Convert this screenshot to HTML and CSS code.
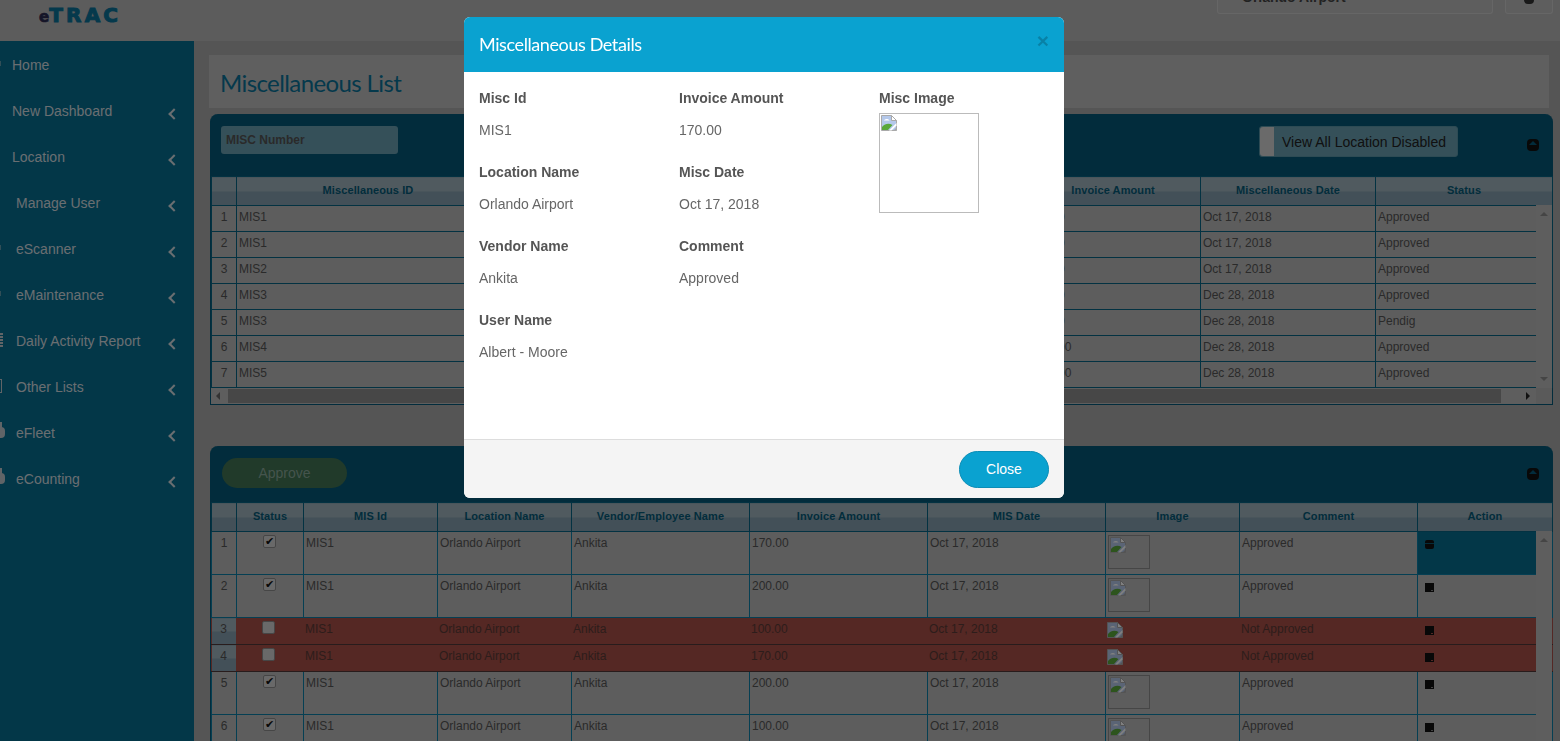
FILE: index.html
```html
<!DOCTYPE html>
<html lang="en">
<head>
  <meta charset="UTF-8">
  <title>Miscellaneous List</title>
  <link rel="stylesheet" href="styles.css">
</head>
<body>
  <svg class="defs" width="0" height="0">
    <symbol id="broken" viewBox="0 0 16 16">
      <path d="M0.5 0.5H10.5L15.5 5.5V15.5H0.5Z" fill="#b4c8ea" stroke="#a9a9a9"/>
      <path d="M10.5 0.5V5.5H15.5Z" fill="#fff" stroke="#a9a9a9"/>
      <path d="M3 5.5C4 3.5 7.5 3.5 8.5 5.5Z" fill="#fff"/>
      <path d="M1 15V12C4 8.5 8 8 11.5 10L7 15Z" fill="#5aa83a"/>
      <path d="M15.5 8L8 15.5H10.5L15.5 10.5Z" fill="#fff"/>
      <path d="M12.5 15.5L15.5 12.5V15.5Z" fill="#a9a9a9"/>
    </symbol>
  </svg>

  <header class="topbar">
    <div class="logo"><span class="logo-e">e</span>TRAC</div>
    <div class="top-right">
      <div class="loc-box"><span class="loc-name">Orlando Airport</span></div>
      <div class="gear-box"><span class="gear-dot"></span></div>
    </div>
  </header>

  <div class="layout">
    <nav class="sidebar">
      <a class="nav-item nav-plain"><b class="stub stub-tick"></b><span>Home</span></a>
      <a class="nav-item nav-plain"><span>New Dashboard</span><i class="chev"></i></a>
      <a class="nav-item nav-plain"><span>Location</span><i class="chev"></i></a>
      <a class="nav-item"><span>Manage User</span><i class="chev"></i></a>
      <a class="nav-item"><b class="stub stub-tick"></b><span>eScanner</span><i class="chev"></i></a>
      <a class="nav-item"><b class="stub stub-tick"></b><span>eMaintenance</span><i class="chev"></i></a>
      <a class="nav-item"><b class="stub stub-list"></b><span>Daily Activity Report</span><i class="chev"></i></a>
      <a class="nav-item"><b class="stub stub-box"></b><span>Other Lists</span><i class="chev"></i></a>
      <a class="nav-item"><b class="stub stub-lock"></b><span>eFleet</span><i class="chev"></i></a>
      <a class="nav-item"><b class="stub stub-lock"></b><span>eCounting</span><i class="chev"></i></a>
    </nav>

    <main class="content">
      <div class="title-box"><h1>Miscellaneous List</h1></div>

      <section class="panel panel-top">
        <div class="panel-head">
          <input class="search-input" type="text" placeholder="MISC Number">
          <div class="toggle"><span class="toggle-handle"></span><span class="toggle-label">View All Location Disabled</span></div>
          <span class="collapse"></span>
        </div>
        <div class="grid-wrap">
          <table class="grid grid-one">
            <colgroup>
              <col class="c-num"><col class="c-wide"><col class="c-wide"><col class="c-wide"><col class="c-mid"><col class="c-mid"><col class="c-last">
            </colgroup>
            <thead>
              <tr><th></th><th>Miscellaneous ID</th><th>Location Name</th><th>Vendor Name</th><th>Invoice Amount</th><th>Miscellaneous Date</th><th>Status</th></tr>
            </thead>
            <tbody>
              <tr><td class="num">1</td><td>MIS1</td><td>Orlando Airport</td><td>Ankita</td><td>170.00</td><td>Oct 17, 2018</td><td>Approved</td></tr>
              <tr><td class="num">2</td><td>MIS1</td><td>Orlando Airport</td><td>Ankita</td><td>200.00</td><td>Oct 17, 2018</td><td>Approved</td></tr>
              <tr><td class="num">3</td><td>MIS2</td><td>Orlando Airport</td><td>Ankita</td><td>100.00</td><td>Oct 17, 2018</td><td>Approved</td></tr>
              <tr><td class="num">4</td><td>MIS3</td><td>Orlando Airport</td><td>Ankita</td><td>170.00</td><td>Dec 28, 2018</td><td>Approved</td></tr>
              <tr><td class="num">5</td><td>MIS3</td><td>Orlando Airport</td><td>Ankita</td><td>200.00</td><td>Dec 28, 2018</td><td>Pendig</td></tr>
              <tr><td class="num">6</td><td>MIS4</td><td>Orlando Airport</td><td>Ankita</td><td>1000.00</td><td>Dec 28, 2018</td><td>Approved</td></tr>
              <tr><td class="num">7</td><td>MIS5</td><td>Orlando Airport</td><td>Ankita</td><td>1000.00</td><td>Dec 28, 2018</td><td>Approved</td></tr>
            </tbody>
          </table>
          <div class="vscroll vscroll-top"><i class="arrow-up"></i><i class="arrow-down"></i></div>
        </div>
        <div class="hscroll"><i class="arrow-left"></i><span class="hthumb"></span><i class="arrow-right"></i><span class="hcorner"></span></div>
      </section>

      <section class="panel panel-bottom">
        <div class="panel-head panel-head-low">
          <button class="approve-btn">Approve</button>
          <span class="collapse"></span>
        </div>
        <div class="grid-wrap">
          <table class="grid grid-two">
            <colgroup>
              <col class="d-num"><col class="d-status"><col class="d-std"><col class="d-std"><col class="d-lg"><col class="d-lg"><col class="d-lg"><col class="d-std"><col class="d-lg"><col class="d-last">
            </colgroup>
            <thead>
              <tr><th></th><th>Status</th><th>MIS Id</th><th>Location Name</th><th>Vendor/Employee Name</th><th>Invoice Amount</th><th>MIS Date</th><th>Image</th><th>Comment</th><th>Action</th></tr>
            </thead>
            <tbody>
              <tr class="tall"><td class="num">1</td><td class="mid"><input class="chk" type="checkbox" checked></td><td>MIS1</td><td>Orlando Airport</td><td>Ankita</td><td>170.00</td><td>Oct 17, 2018</td><td><span class="thumb"><svg class="bi"><use href="#broken"/></svg></span></td><td>Approved</td><td class="act act-on"><span class="act-icon act-icon-on"></span></td></tr>
              <tr class="tall"><td class="num">2</td><td class="mid"><input class="chk" type="checkbox" checked></td><td>MIS1</td><td>Orlando Airport</td><td>Ankita</td><td>200.00</td><td>Oct 17, 2018</td><td><span class="thumb"><svg class="bi"><use href="#broken"/></svg></span></td><td>Approved</td><td class="act"><span class="act-icon"></span></td></tr>
              <tr class="red"><td class="num">3</td><td class="mid"><input class="chk" type="checkbox"></td><td>MIS1</td><td>Orlando Airport</td><td>Ankita</td><td>100.00</td><td>Oct 17, 2018</td><td><svg class="bi"><use href="#broken"/></svg></td><td>Not Approved</td><td class="act"><span class="act-icon"></span></td></tr>
              <tr class="red"><td class="num">4</td><td class="mid"><input class="chk" type="checkbox"></td><td>MIS1</td><td>Orlando Airport</td><td>Ankita</td><td>170.00</td><td>Oct 17, 2018</td><td><svg class="bi"><use href="#broken"/></svg></td><td>Not Approved</td><td class="act"><span class="act-icon"></span></td></tr>
              <tr class="tall"><td class="num">5</td><td class="mid"><input class="chk" type="checkbox" checked></td><td>MIS1</td><td>Orlando Airport</td><td>Ankita</td><td>200.00</td><td>Oct 17, 2018</td><td><span class="thumb"><svg class="bi"><use href="#broken"/></svg></span></td><td>Approved</td><td class="act"><span class="act-icon"></span></td></tr>
              <tr class="tall"><td class="num">6</td><td class="mid"><input class="chk" type="checkbox" checked></td><td>MIS1</td><td>Orlando Airport</td><td>Ankita</td><td>100.00</td><td>Oct 17, 2018</td><td><span class="thumb"><svg class="bi"><use href="#broken"/></svg></span></td><td>Approved</td><td class="act"><span class="act-icon"></span></td></tr>
            </tbody>
          </table>
          <div class="vscroll vscroll-low"><i class="arrow-up"></i></div>
        </div>
      </section>
    </main>
  </div>

  <div class="backdrop"></div>

  <div class="modal">
    <div class="modal-head">
      <h4>Miscellaneous Details</h4>
      <span class="modal-x">&times;</span>
    </div>
    <div class="modal-body">
      <div class="field-col">
        <div class="field"><label>Misc Id</label><p>MIS1</p></div>
        <div class="field"><label>Location Name</label><p>Orlando Airport</p></div>
        <div class="field"><label>Vendor Name</label><p>Ankita</p></div>
        <div class="field"><label>User Name</label><p>Albert - Moore</p></div>
      </div>
      <div class="field-col">
        <div class="field"><label>Invoice Amount</label><p>170.00</p></div>
        <div class="field"><label>Misc Date</label><p>Oct 17, 2018</p></div>
        <div class="field"><label>Comment</label><p>Approved</p></div>
      </div>
      <div class="field-col">
        <label>Misc Image</label>
        <div class="misc-image"><svg class="bi"><use href="#broken"/></svg></div>
      </div>
    </div>
    <div class="modal-foot">
      <button class="close-btn">Close</button>
    </div>
  </div>
</body>
</html>
```

FILE: styles.css
```css
* {
  box-sizing: border-box;
}
html, body {
  height: 741px;
  overflow: hidden;
}
body {
  margin: 0;
  font-family: "Liberation Sans", Arial, sans-serif;
  font-size: 12px;
  color: #555;
  background-color: #ababab;
}
.defs {
  display: block;
  height: 0;
}
.bi {
  display: block;
  width: 16px;
  height: 16px;
}

/* top bar */
.topbar {
  height: 41px;
  display: flex;
  justify-content: space-between;
  background-color: #b8b8b8;
}
.logo {
  margin: 3px 0 0 39px;
  font-family: "DejaVu Sans", sans-serif;
  font-weight: bold;
  font-size: 20px;
  line-height: 24px;
  letter-spacing: 3.2px;
  color: #0a7298;
  -webkit-text-stroke: 1px #0a7298;
}
.logo-e {
  font-size: 15px;
  letter-spacing: 0;
  color: #2a2a50;
  -webkit-text-stroke: 0.7px #2a2a50;
}
.top-right {
  display: flex;
  gap: 12px;
  margin-right: 7px;
}
.loc-box {
  width: 276px;
  height: 14px;
  padding-left: 24px;
  overflow: hidden;
  background-color: #bdbdbd;
  border: 1px solid #ccc;
  border-top: none;
  border-radius: 0 0 3px 3px;
}
.loc-name {
  display: block;
  margin-top: -11px;
  line-height: 16px;
  font-size: 14px;
  font-weight: bold;
  color: #444;
}
.gear-box {
  width: 48px;
  height: 14px;
  display: flex;
  justify-content: center;
  background-color: #bdbdbd;
  border: 1px solid #ccc;
  border-top: none;
  border-radius: 0 0 3px 3px;
}
.gear-dot {
  width: 10px;
  height: 4px;
  background-color: #333;
  border-radius: 0 0 5px 5px;
}

.layout {
  display: flex;
  height: 700px;
}

/* sidebar */
.sidebar {
  width: 194px;
  flex: none;
  padding-top: 1px;
  background-color: #066e90;
}
.nav-item {
  height: 46px;
  display: flex;
  align-items: center;
  padding: 0 16px 0 16px;
  font-size: 14px;
  color: #d4dde2;
  overflow: hidden;
  position: relative;
}
.nav-plain {
  padding-left: 12px;
}
.chev {
  width: 8px;
  height: 8px;
  margin-left: auto;
  margin-top: 6px;
  transform: rotate(45deg);
  border-left: 2px solid #d4dde2;
  border-bottom: 2px solid #d4dde2;
}
.stub {
  position: absolute;
  left: 0;
  top: 15px;
  background-color: #c0c9ce;
}
.stub-tick {
  width: 1px;
  height: 5px;
  top: 19px;
  opacity: 0.5;
}
.stub-list {
  width: 3px;
  height: 15px;
  background: repeating-linear-gradient(#c0c9ce 0, #c0c9ce 2px, transparent 2px, transparent 3px);
}
.stub-box {
  width: 2px;
  height: 14px;
  background: transparent;
  border: 1px solid #c0c9ce;
  border-left: none;
}
.stub-lock {
  left: -3px;
  top: 17px;
  width: 8px;
  height: 11px;
  border-radius: 4px;
}
.stub-lock::before {
  content: "";
  position: absolute;
  left: 2px;
  top: -5px;
  width: 3px;
  height: 7px;
  background-color: #c0c9ce;
}

/* content */
.content {
  flex: 1;
  min-width: 0;
  padding: 14px 7px 0 16px;
}
.title-box {
  height: 53px;
  margin: 0 4px 6px -1px;
  padding-left: 11px;
  background-color: #bfbfbf;
}
h1 {
  margin: 0;
  font-family: Lato, "Open Sans", sans-serif;
  font-weight: normal;
  font-size: 24px;
  letter-spacing: -0.6px;
  line-height: 55px;
  color: #0a7298;
}
.panel {
  border: 1px solid #045878;
  border-top: none;
  border-radius: 8px 8px 0 0;
  background-color: #045878;
}
.panel-top {
  height: 291px;
  margin-bottom: 41px;
}
.panel-bottom {
  height: 295px;
}
.panel-head {
  height: 62px;
  display: flex;
  align-items: flex-start;
  padding: 12px 13px 0 10px;
}
.panel-head-low {
  height: 56px;
}
.search-input {
  width: 177px;
  height: 28px;
  padding: 0 5px;
  border: none;
  border-radius: 3px;
  background-color: #6aa0b2;
  font-family: "Liberation Sans", Arial, sans-serif;
  font-size: 12px;
  font-weight: bold;
}
.search-input::placeholder {
  color: #555;
  opacity: 1;
}
.toggle {
  width: 199px;
  height: 31px;
  margin-left: auto;
  display: flex;
  background-color: #6aa0b2;
  border: 1px solid #5b97a8;
  border-radius: 3px;
}
.toggle-handle {
  width: 14px;
  background-color: #d4d4d4;
  border-radius: 3px 0 0 3px;
}
.toggle-label {
  padding-left: 8px;
  font-size: 14px;
  line-height: 30px;
  color: #222;
}
.collapse {
  width: 12px;
  height: 12px;
  margin: 13px 0 0 69px;
  position: relative;
  background-color: #111;
  border-radius: 4px;
}
.collapse::after {
  content: "";
  position: absolute;
  left: 2px;
  top: 2px;
  border: 4px solid transparent;
  border-top: none;
  border-bottom: 4px solid #045878;
}
.panel-head-low .collapse {
  margin: 10px 0 0 auto;
}
.approve-btn {
  width: 125px;
  height: 30px;
  padding: 0;
  margin: 0 0 0 1px;
  border: none;
  border-radius: 15px;
  background-color: #427454;
  color: #8aa89a;
  font-family: "Liberation Sans", Arial, sans-serif;
  font-size: 14px;
}

/* grids */
.grid-wrap {
  position: relative;
  background-color: #bababa;
}
.grid {
  width: 1341px;
  table-layout: fixed;
  border-collapse: collapse;
  background-color: #bababa;
}
.grid th {
  height: 29px;
  padding: 0 0 2px;
  font-size: 11px;
  letter-spacing: 0.1px;
  color: #055a78;
  border: 1px solid #066484;
  background: linear-gradient(#a0b4be 0, #a0b4be 50%, #86a0b0 50%, #86a0b0 100%);
}
.grid td {
  padding: 4px 2px 0;
  vertical-align: top;
  line-height: 14px;
  color: #555;
  white-space: nowrap;
  overflow: hidden;
  border: 1px solid #066484;
}
.grid-one tbody tr {
  height: 26px;
}
.grid-two tbody tr {
  height: 43px;
}
.grid-two td {
  border-color: #0a7fa6;
}
.grid td.num {
  text-align: center;
}
.grid td.mid {
  padding-top: 3px;
  text-align: center;
}
.c-num, .d-num {
  width: 25px;
}
.c-wide {
  width: 263px;
}
.c-mid {
  width: 175px;
}
.c-last {
  width: 177px;
}
.d-status {
  width: 67px;
}
.d-std {
  width: 134px;
}
.d-lg {
  width: 178px;
}
.d-last {
  width: 135px;
}
.grid-two tbody tr.red {
  height: 27px;
}
.grid-two .red td {
  background-color: #aa5048;
  border-left-color: #aa5048;
  border-right-color: #aa5048;
  border-top-color: #503838;
  border-bottom-color: #503838;
  padding-left: 1px;
  color: #5a3a36;
}
.grid-two .red td.num {
  background: linear-gradient(#a0b4be 0, #a0b4be 50%, #86a0b0 50%, #86a0b0 100%);
  color: #555;
}
.chk {
  appearance: none;
  display: inline-block;
  width: 13px;
  height: 13px;
  margin: 0 0 0 -2px;
  position: relative;
  border: 1px solid #8c8c8c;
  border-radius: 2px;
  background-color: #d2d2d2;
}
.chk:checked::after {
  content: "\2714";
  position: absolute;
  left: 1px;
  top: -1px;
  font-size: 11px;
  line-height: 13px;
  color: #111;
}
.thumb {
  display: block;
  width: 42px;
  height: 34px;
  margin-top: -1px;
  padding: 1px 0 0 1px;
  border: 1px solid #8c8c8c;
}
.act {
  padding-left: 7px !important;
  padding-top: 8px !important;
}
.act-on {
  background-color: #066e90;
}
.act-icon {
  display: block;
  width: 9px;
  height: 9px;
  position: relative;
  background-color: #111;
}
.act-icon::after {
  content: "";
  position: absolute;
  right: 1px;
  bottom: 1px;
  width: 2px;
  height: 1px;
  background-color: #888;
}
.red .act-icon::after {
  background-color: #aa5048;
}
.act-icon-on {
  border-radius: 2px;
  background: linear-gradient(#111 0, #111 30%, #0a5a74 30%, #0a5a74 42%, #111 42%);
}
.act-icon-on::after {
  display: none;
}
.vscroll {
  position: absolute;
  right: 0;
  top: 29px;
  width: 16px;
  background-color: #bcbcbc;
}
.vscroll-top {
  height: 183px;
}
.vscroll-low {
  height: 210px;
}
.arrow-up, .arrow-down, .arrow-left, .arrow-right {
  position: absolute;
  border: 4px solid transparent;
}
.arrow-up {
  left: 4px;
  top: 7px;
  border-top: none;
  border-bottom-color: #8a8a8a;
}
.arrow-down {
  left: 4px;
  bottom: 7px;
  border-bottom: none;
  border-top-color: #8a8a8a;
}
.hscroll {
  height: 16px;
  position: relative;
  display: flex;
  align-items: center;
  background-color: #bcbcbc;
}
.hthumb {
  margin-left: 17px;
  width: 1273px;
  height: 14px;
  background-color: #8e8e8e;
}
.hcorner {
  position: absolute;
  right: 0;
  top: 0;
  width: 16px;
  height: 16px;
  background-color: #b4b4b4;
}
.arrow-left {
  left: 5px;
  top: 4px;
  border-left: none;
  border-right-color: #666;
}
.arrow-right {
  left: 1315px;
  top: 4px;
  border-right: none;
  border-left-color: #222;
}

/* dim layer and dialog */
.backdrop {
  position: fixed;
  inset: 0;
  background-color: rgba(0, 0, 0, 0.5);
}
.modal {
  position: fixed;
  left: 464px;
  top: 17px;
  width: 600px;
  height: 481px;
  display: flex;
  flex-direction: column;
  background-color: #fff;
  border-radius: 6px;
  overflow: hidden;
}
.modal-head {
  height: 55px;
  flex: none;
  display: flex;
  justify-content: space-between;
  padding: 0 15px;
  background-color: #0aa2d0;
}
.modal-head h4 {
  margin: 0;
  font-family: Lato, "Open Sans", sans-serif;
  font-weight: normal;
  font-size: 18px;
  letter-spacing: -0.4px;
  line-height: 55px;
  color: #fff;
}
.modal-x {
  font-size: 21px;
  font-weight: bold;
  line-height: 48px;
  color: rgba(0, 0, 0, 0.2);
}
.modal-body {
  flex: 1;
  display: flex;
  padding: 18px 0 0 15px;
  font-size: 14px;
}
.field-col {
  width: 200px;
  flex: none;
}
.field {
  height: 74px;
}
.field-col label {
  display: block;
  height: 16px;
  line-height: 16px;
  font-weight: bold;
  color: #555;
}
.field p {
  margin: 16px 0 0;
  line-height: 16px;
  color: #666;
}
.misc-image {
  width: 100px;
  height: 100px;
  margin-top: 7px;
  padding: 1px;
  border: 1px solid #bbb;
}
.modal-foot {
  height: 59px;
  flex: none;
  display: flex;
  justify-content: flex-end;
  align-items: flex-start;
  padding: 11px 15px 0;
  background-color: #f4f4f4;
  border-top: 1px solid #ddd;
}
.close-btn {
  width: 90px;
  height: 37px;
  padding: 0 0 2px;
  border: 1px solid #0a8db6;
  border-radius: 19px;
  background-color: #0aa2d0;
  color: #fff;
  font-family: "Liberation Sans", Arial, sans-serif;
  font-size: 14px;
}
```
